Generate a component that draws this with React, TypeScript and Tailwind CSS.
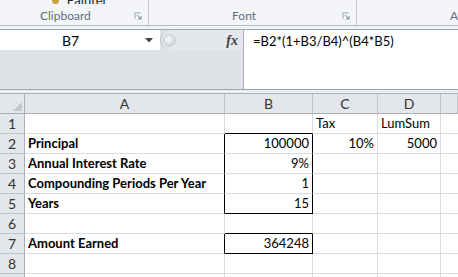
const font = { fontFamily: "Lato, 'Liberation Sans', sans-serif" };

type Row = { n: number; a?: string; b?: string; c?: string; d?: string };

const rows: Row[] = [
  { n: 1, c: "Tax", d: "LumSum" },
  { n: 2, a: "Principal", b: "100000", c: "10%", d: "5000" },
  { n: 3, a: "Annual Interest Rate", b: "9%" },
  { n: 4, a: "Compounding Periods Per Year", b: "1" },
  { n: 5, a: "Years", b: "15" },
  { n: 6 },
  { n: 7, a: "Amount Earned", b: "364248" },
  { n: 8 },
  { n: 9 },
];

const boxed = [2, 3, 4, 5, 7];
const bottomBlack = [1, 5, 6, 7];

function Launcher() {
  return (
    <svg width="8" height="8" viewBox="0 0 8 8">
      <path d="M0.5 0.5h6v1h-5v5h-1z" fill="#9aa3ae" />
      <path d="M3 3l4 4M7 4v3h-3" stroke="#7d8692" strokeWidth="1" fill="none" />
    </svg>
  );
}

function Ribbon() {
  return (
    <div className="flex h-[26px] border-b border-[#b4bac3] bg-[#f3f5f8] text-[12px] text-[#5f6c7e]">
      <div className="flex w-[150px] flex-col border-r border-[#c5cad2]">
        <div className="flex h-[4px] items-end overflow-hidden pl-[52px]">
          <div className="mr-[8px] h-[4px] w-[7px] rounded-b-sm bg-[#c9a23a]" />
          <span className="-mb-[3px] text-[13px] leading-none text-[#222]">Format Painter</span>
        </div>
        <div className="flex flex-1 items-center pl-[40px] pr-[6px] pt-[3px]">
          <span className="flex-1">Clipboard</span>
          <Launcher />
        </div>
      </div>
      <div className="flex w-[209px] flex-col border-r border-[#c5cad2]">
        <div className="h-[4px]" />
        <div className="flex flex-1 items-center pl-[83px] pr-[6px] pt-[3px]">
          <span className="flex-1">Font</span>
          <Launcher />
        </div>
      </div>
      <div className="flex flex-1 flex-col">
        <div className="h-[4px]" />
        <div className="flex flex-1 items-center pl-[93px] pt-[3px]">
          <span>A</span>
        </div>
      </div>
    </div>
  );
}

function FormulaBar() {
  return (
    <div className="flex h-[61px] border-y border-[#9da4ad] bg-[#dfe2e7]">
      <div className="flex w-[243px] flex-col">
        <div className="flex h-[20px]">
          <div className="flex w-[160px] items-center bg-white text-[14px] text-black">
            <span className="flex-1 pl-[62px]">B7</span>
            <svg width="8" height="5" viewBox="0 0 8 5" className="mr-[7px]">
              <path d="M0 0h8L4 4.5z" fill="#444" />
            </svg>
          </div>
          <div className="flex flex-1 items-center rounded-l-[10px] border-l border-[#b7bcc4] bg-[#e4e7eb]">
            <div className="ml-[3px] h-[11px] w-[11px] rounded-full bg-[radial-gradient(circle_at_40%_40%,#fdfdfd,#b9bec5)] shadow-[0_0_0_1px_#c8ccd2]" />
            <span
              className="ml-auto mr-[5px] text-[14px] font-bold italic text-[#444]"
              style={{ fontFamily: "'Liberation Serif', serif" }}
            >
              fx
            </span>
          </div>
        </div>
      </div>
      <div className="flex-1 border-l border-[#a7adb5] bg-white pl-[9px] pt-[2px] text-[13px] text-black">
        =B2*(1+B3/B4)^(B4*B5)
      </div>
    </div>
  );
}

function Cell({
  w,
  text,
  align,
  bold,
  right,
  bottom,
}: {
  w: string;
  text?: string;
  align: "left" | "right";
  bold?: boolean;
  right: boolean;
  bottom: boolean;
}) {
  return (
    <div
      className={`flex h-full shrink-0 items-end overflow-hidden whitespace-nowrap border-b border-r px-[3px] pb-[1px] text-[13px] leading-[17px] text-black ${w} ${
        align === "right" ? "justify-end" : "justify-start"
      } ${bold ? "font-bold" : ""} ${right ? "border-r-black" : "border-r-[#d9dcdf]"} ${
        bottom ? "border-b-black" : "border-b-[#d9dcdf]"
      }`}
    >
      {text}
    </div>
  );
}

function Sheet() {
  return (
    <div className="flex flex-col">
      <div className="flex h-[21px] border-y border-[#a9b0b8] bg-[#e3e6eb] text-[14px] text-[#333]">
        <div className="relative w-[25px] shrink-0 border-r border-[#a9b0b8]">
          <svg width="9" height="9" viewBox="0 0 9 9" className="absolute bottom-[2px] right-[2px]">
            <path d="M9 0v9H0z" fill="#c3c8ce" />
          </svg>
        </div>
        {[
          ["A", "w-[200px]"],
          ["B", "w-[88px]"],
          ["C", "w-[65px]"],
          ["D", "w-[63px]"],
          ["", "flex-1"],
        ].map(([l, w]) => (
          <div
            key={l}
            className={`flex shrink-0 items-center justify-center border-r border-[#c1c6cc] ${w}`}
          >
            {l}
          </div>
        ))}
      </div>
      {rows.map((r) => (
        <div key={r.n} className="flex h-[20px] bg-white">
          <div className="flex w-[25px] shrink-0 items-center justify-center border-b border-r border-b-[#c1c6cc] border-r-[#a9b0b8] bg-[#e3e6eb] text-[14px] text-[#333]">
            {r.n}
          </div>
          <Cell w="w-[200px]" text={r.a} align="left" bold right={boxed.includes(r.n)} bottom={false} />
          <Cell
            w="w-[88px]"
            text={r.b}
            align="right"
            right={boxed.includes(r.n)}
            bottom={bottomBlack.includes(r.n)}
          />
          <Cell w="w-[65px]" text={r.c} align={r.n === 1 ? "left" : "right"} right={false} bottom={false} />
          <Cell w="w-[63px]" text={r.d} align={r.n === 1 ? "left" : "right"} right={false} bottom={false} />
          <div className="flex-1 border-b border-[#d9dcdf]" />
        </div>
      ))}
    </div>
  );
}

export default function App() {
  return (
    <div className="h-[277px] w-[458px] overflow-hidden bg-white" style={font}>
      <Ribbon />
      <div className="h-[3px] bg-[#f1f3f6]" />
      <FormulaBar />
      <div className="h-[3px] bg-[#eceef1]" />
      <Sheet />
    </div>
  );
}
